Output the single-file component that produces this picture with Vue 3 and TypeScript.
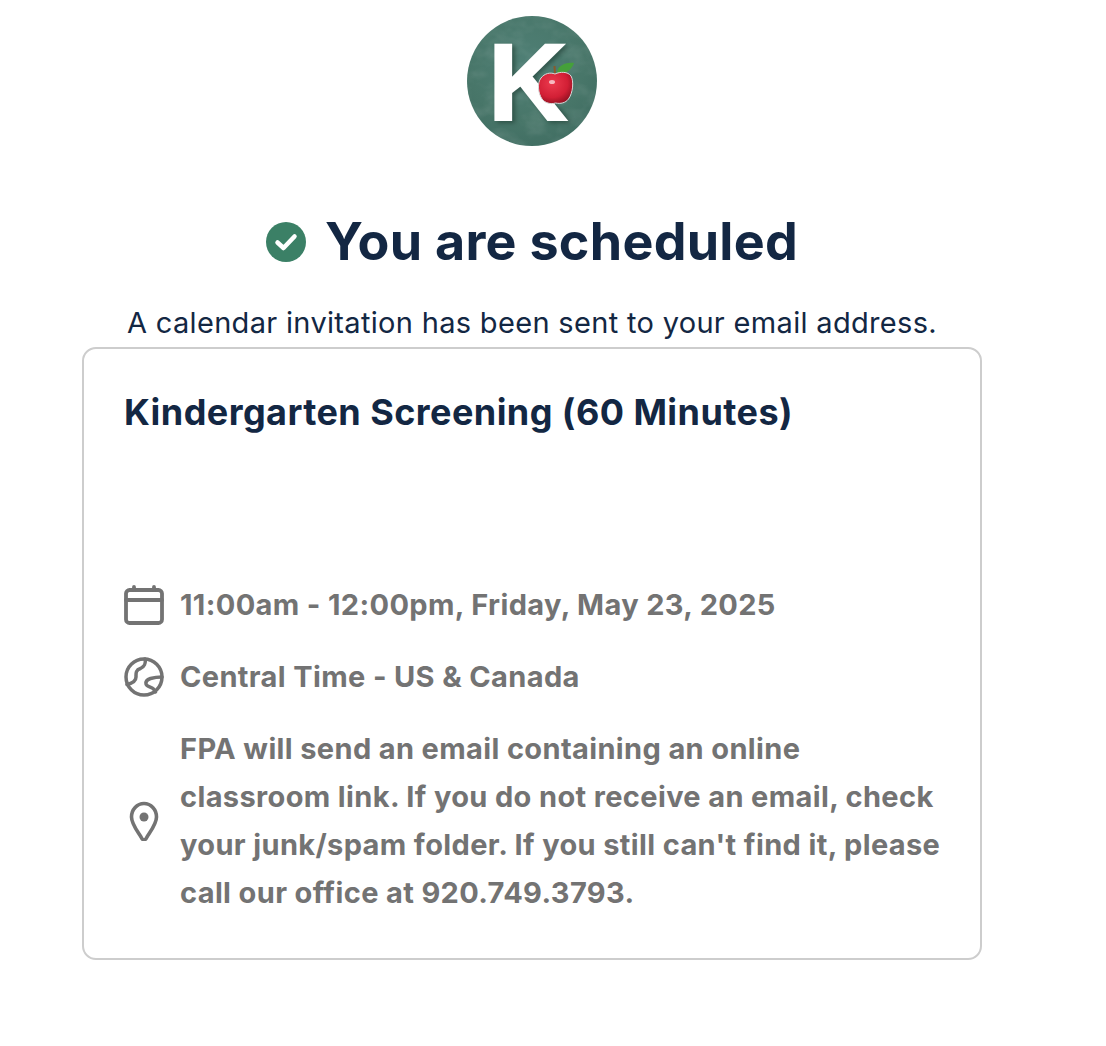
<script setup lang="ts">
interface Detail {
  id: string;
  text: string;
}
const details: Detail[] = [
  { id: "calendar", text: "11:00am - 12:00pm, Friday, May 23, 2025" },
  { id: "globe", text: "Central Time - US & Canada" },
  {
    id: "pin",
    text: "FPA will send an email containing an online classroom link. If you do not receive an email, check your junk/spam folder. If you still can't find it, please call our office at 920.749.3793.",
  },
];
</script>

<template>
  <main class="page">
    <svg class="logo" width="130" height="130" viewBox="0 0 130 130" role="img" aria-label="Kindergarten logo">
      <defs>
        <radialGradient id="board" cx="45%" cy="35%" r="75%">
          <stop offset="0" stop-color="#4f7f75" />
          <stop offset="0.6" stop-color="#487669" />
          <stop offset="1" stop-color="#3f6c61" />
        </radialGradient>
        <radialGradient id="apple" cx="40%" cy="35%" r="70%">
          <stop offset="0" stop-color="#ec3a4e" />
          <stop offset="0.65" stop-color="#d21f35" />
          <stop offset="1" stop-color="#8f1020" />
        </radialGradient>
        <filter id="chalk" x="0" y="0" width="100%" height="100%">
          <feTurbulence type="fractalNoise" baseFrequency="0.05 0.07" numOctaves="3" seed="9" />
          <feColorMatrix values="0 0 0 0 1  0 0 0 0 1  0 0 0 0 1  0.8 0 0 0 -0.3" />
        </filter>
        <clipPath id="disc">
          <circle cx="65" cy="65" r="65" />
        </clipPath>
      </defs>
      <circle cx="65" cy="65" r="65" fill="url(#board)" />
      <g clip-path="url(#disc)">
        <rect width="130" height="130" filter="url(#chalk)" opacity="0.22" />
      </g>
      <text class="k" x="21" y="104" fill="#ffffff">K</text>
      <path d="M86.500 50h2l.5 8h-2z" fill="#8a5a2a" />
      <path d="M90 57c0-6 7-11 17-10-2 6-8 12-17 10z" fill="#45a03a" />
      <g transform="translate(-2 11)">
        <path
          d="M90 47c5-2.500 13-2.500 16 2 3 5 2 17-2.500 23-3 4-8 5-13 4-5 1.500-10.500 0-13.500-4-4-6-5-16-1-21 3.500-4.500 9-6 14-4z"
          fill="url(#apple)"
          stroke="#d9d9d9"
          stroke-width="1"
        />
        <ellipse cx="87" cy="55" rx="3" ry="2" fill="#ffffff" opacity="0.65" />
      </g>
    </svg>

    <h1 class="title">
      <svg class="check" width="40" height="40" viewBox="0 0 40 40" aria-hidden="true">
        <circle cx="20" cy="20" r="20" fill="#3b8066" />
        <path d="M11.500 20.500l6 5.500 11-11.500" fill="none" stroke="#fff" stroke-width="4.500" stroke-linecap="round" stroke-linejoin="round" />
      </svg>
      <span>You are scheduled</span>
    </h1>

    <p class="sub">A calendar invitation has been sent to your email address.</p>

    <section class="card">
      <h2 class="event">Kindergarten Screening (60 Minutes)</h2>
      <ul class="details">
        <li v-for="d in details" :key="d.id" class="row">
          <svg v-if="d.id === 'calendar'" class="icon" width="40" height="40" viewBox="0 0 40 40" fill="none" stroke="#737373" stroke-width="3.800" stroke-linecap="round" stroke-linejoin="round" aria-hidden="true">
            <rect x="2" y="5" width="36" height="33" rx="3.500" />
            <path d="M2 15h36M10 2v3M30 2v3" />
          </svg>
          <svg v-else-if="d.id === 'globe'" class="icon" width="40" height="40" viewBox="0 0 40 40" fill="none" stroke="#737373" stroke-width="3.500" stroke-linecap="round" stroke-linejoin="round" aria-hidden="true">
            <circle cx="20" cy="20" r="18" />
            <path d="M21 2c1 4-1 8-4.500 9.500-5 1.500-4.500 5-4.500 8.500s-3 6-9 7.500" />
            <path d="M38 20c-4 0-8 .5-11.500 1.500-3 1-5 3-4.500 5.500.5 3 6 3 7.500 5 1 1 1.500 2 2 3" />
          </svg>
          <svg v-else class="icon" width="40" height="40" viewBox="0 0 40 40" aria-hidden="true">
            <path d="M20 39c-1 0-2-1-3-3-3-5-9.500-13-9.500-20C7.500 8.500 13 2.500 20 2.500S32.500 8.500 32.500 16c0 7-6.500 15-9.500 20-1 2-2 3-3 3z" fill="none" stroke="#737373" stroke-width="3.600" stroke-linejoin="round" />
            <circle cx="20" cy="16" r="4.500" fill="#737373" />
          </svg>
          <span class="text">{{ d.text }}</span>
        </li>
      </ul>
    </section>
  </main>
</template>

<style scoped>
.page {
  width: 900px;
  margin-left: 82px;
  padding-top: 16px;
  display: flex;
  flex-direction: column;
  align-items: center;
  font-family: "Inter", "Open Sans", sans-serif;
}
.logo {
  display: block;
}
.title {
  margin: 64px 0 0;
  display: flex;
  align-items: center;
  gap: 19px;
  font-size: 52px;
  line-height: 64px;
  font-weight: 700;
  letter-spacing: 0.28px;
  color: #132743;
}
.check {
  flex: none;
}
.sub {
  margin: 31px 0 0;
  font-size: 29px;
  line-height: 36px;
  letter-spacing: 0.32px;
  color: #132743;
}
.card {
  box-sizing: border-box;
  width: 900px;
  height: 613px;
  margin-top: 6px;
  padding: 41px 30px 41px 40px;
  border: 2px solid #cdcdcd;
  border-radius: 14px;
}
.event {
  margin: 0;
  font-size: 36px;
  line-height: 44px;
  font-weight: 650;
  letter-spacing: 0.44px;
  color: #132743;
}
.details {
  list-style: none;
  margin: 147px 0 0;
  padding: 0;
  display: flex;
  flex-direction: column;
  gap: 24px;
}
.row {
  display: flex;
  align-items: center;
  gap: 16px;
}
.icon {
  flex: none;
}
.text {
  font-size: 29px;
  line-height: 48px;
  font-weight: 650;
  letter-spacing: 0.36px;
  color: #737373;
}
.k {
  font-family: "Liberation Sans", sans-serif;
  font-weight: 700;
  font-size: 110px;
  stroke: #ffffff;
  stroke-width: 1.8px;
  filter: drop-shadow(3px 2px 2px rgba(30, 60, 50, 0.6));
}
</style>
